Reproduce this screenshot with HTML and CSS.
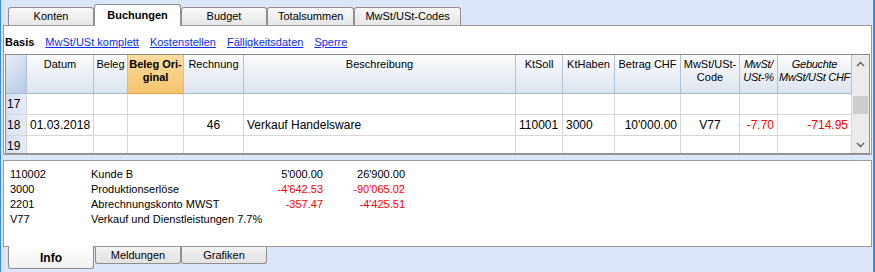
FILE: index.html
```html
<!DOCTYPE html>
<html lang="de">
  <head>
    <meta charset="UTF-8" />
    <title>Buchungen</title>
    <link rel="stylesheet" href="styles.css">
  </head>
  <body>
    <div class="window">
      <div class="tabs top-tabs">
        <div class="tab">Konten</div>
        <div class="tab active">Buchungen</div>
        <div class="tab">Budget</div>
        <div class="tab">Totalsummen</div>
        <div class="tab">MwSt/USt-Codes</div>
      </div>

      <div class="panel main">
        <div class="subbar">
          <b>Basis</b>
          <a href="#">MwSt/USt komplett</a>
          <a href="#">Kostenstellen</a>
          <a href="#">Fälligkeitsdaten</a>
          <a href="#">Sperre</a>
        </div>

        <div class="grid">
          <div class="sheet">
            <div class="row head">
              <div class="cell rn"></div>
              <div class="cell">Datum</div>
              <div class="cell">Beleg</div>
              <div class="cell orange">Beleg Ori-<br>ginal</div>
              <div class="cell">Rechnung</div>
              <div class="cell">Beschreibung</div>
              <div class="cell">KtSoll</div>
              <div class="cell">KtHaben</div>
              <div class="cell">Betrag CHF</div>
              <div class="cell">MwSt/USt-<br>Code</div>
              <div class="cell it">MwSt/<br>USt-%</div>
              <div class="cell it">Gebuchte<br>MwSt/USt CHF</div>
            </div>
            <div class="row">
              <div class="cell rn">17</div>
              <div class="cell"></div><div class="cell"></div><div class="cell"></div>
              <div class="cell"></div><div class="cell"></div><div class="cell"></div>
              <div class="cell"></div><div class="cell"></div><div class="cell"></div>
              <div class="cell"></div><div class="cell"></div>
            </div>
            <div class="row">
              <div class="cell rn">18</div>
              <div class="cell">01.03.2018</div>
              <div class="cell"></div>
              <div class="cell"></div>
              <div class="cell c">46</div>
              <div class="cell">Verkauf Handelsware</div>
              <div class="cell">110001</div>
              <div class="cell">3000</div>
              <div class="cell r">10'000.00</div>
              <div class="cell c">V77</div>
              <div class="cell r neg">-7.70</div>
              <div class="cell r neg">-714.95</div>
            </div>
            <div class="row">
              <div class="cell rn">19</div>
              <div class="cell"></div><div class="cell"></div><div class="cell"></div>
              <div class="cell"></div><div class="cell"></div><div class="cell"></div>
              <div class="cell"></div><div class="cell"></div><div class="cell"></div>
              <div class="cell"></div><div class="cell"></div>
            </div>
          </div>

          <div class="scrollbar">
            <div class="arrow">
              <svg width="9" height="6" viewBox="0 0 9 6"><polyline points="1,5 4.5,1.5 8,5" fill="none" stroke="#5f5f5f" stroke-width="1.4"/></svg>
            </div>
            <div class="thumb"></div>
            <div class="arrow down">
              <svg width="9" height="6" viewBox="0 0 9 6"><polyline points="1,1 4.5,4.5 8,1" fill="none" stroke="#5f5f5f" stroke-width="1.4"/></svg>
            </div>
          </div>
        </div>
      </div>

      <div class="panel info">
        <div class="info-row"><span>110002</span><span>Kunde B</span><span class="num">5'000.00</span><span class="num">26'900.00</span></div>
        <div class="info-row"><span>3000</span><span>Produktionserlöse</span><span class="num neg">-4'642.53</span><span class="num neg">-90'065.02</span></div>
        <div class="info-row"><span>2201</span><span>Abrechnungskonto MWST</span><span class="num neg">-357.47</span><span class="num neg">-4'425.51</span></div>
        <div class="info-row"><span>V77</span><span>Verkauf und Dienstleistungen 7.7%</span></div>
      </div>

      <div class="tabs bottom-tabs">
        <div class="tab active">Info</div>
        <div class="tab">Meldungen</div>
        <div class="tab">Grafiken</div>
      </div>
    </div>
  </body>
</html>
```

FILE: styles.css
```css
* {
  box-sizing: border-box;
}
body {
  margin: 0;
  font-family: "Liberation Sans", Arial, sans-serif;
  font-size: 11px;
  color: #000;
  background-color: #dbe6f8;
}
.window {
  width: 875px;
  height: 272px;
  border-left: 1px solid #3d8ae0;
  border-right: 2px solid #3d8ae0;
  padding: 0 1px 0 2px;
  overflow: hidden;
}

/* tabs */
.tabs {
  display: flex;
  position: relative;
  z-index: 1;
  padding-left: 5px;
}
.tab {
  min-width: 86px;
  padding: 0 10px;
  border: 1px solid #8f8f8f;
  background: linear-gradient(#f8f8f8, #e6e6e6);
  text-align: center;
}
.top-tabs {
  height: 25px;
  align-items: flex-end;
}
.top-tabs .tab {
  height: 18px;
  line-height: 16px;
  border-bottom: none;
  border-radius: 3px 3px 0 0;
}
.top-tabs .tab.active {
  min-width: 87px;
  height: 22px;
  margin-bottom: -1px;
  line-height: 20px;
  background: #fff;
  font-weight: bold;
}
.bottom-tabs {
  margin-top: -1px;
  align-items: flex-start;
}
.bottom-tabs .tab {
  height: 17px;
  margin-top: 1px;
  line-height: 16px;
  border-top: none;
  border-radius: 0 0 3px 3px;
  background: linear-gradient(#f2f2f2, #e2e2e2);
}
.bottom-tabs .tab.active {
  height: 23px;
  margin: 0 1px 0 0;
  padding-top: 2px;
  line-height: 20px;
  background: linear-gradient(#fff, #f0f0f0);
  font-weight: bold;
  font-size: 12px;
}

/* panels */
.panel {
  border: 1px solid #9b9b9b;
  background: #fff;
}
.main {
  height: 130px;
}
.subbar {
  display: flex;
  gap: 11px;
  height: 28px;
  padding: 9px 0 0 1px;
  line-height: 14px;
}
.subbar a {
  color: #0b30e6;
  text-decoration: underline;
}

/* grid */
.grid {
  display: flex;
  height: 100px;
  margin: 0 1px;
  border: 1px solid #8c8c8c;
  overflow: hidden;
}
.sheet {
  width: 846px;
  font-size: 12px;
}
.row {
  display: grid;
  grid-template-columns: 21px 67px 34px 56px 60px 272px 47px 52px 66px 59px 38px 74px;
}
.cell {
  height: 21px;
  padding: 0 3px;
  line-height: 20px;
  border-right: 1px solid #d6d6d6;
  border-bottom: 1px solid #d6d6d6;
  white-space: nowrap;
  overflow: hidden;
}
.cell.c {
  text-align: center;
}
.cell.r {
  text-align: right;
}
.cell.rn {
  padding: 0 0 0 1px;
  background: linear-gradient(90deg, #d5e1f3, #e5ecf8);
}
.head .cell {
  height: 39px;
  padding: 3px 0 0;
  font-size: 11px;
  line-height: 13px;
  text-align: center;
  background: linear-gradient(#fbfcfd, #dde4ee);
  border-right-color: #b3c1d4;
  border-bottom-color: #a9b7ca;
}
.head .cell.rn {
  background: linear-gradient(135deg, #e6edf8, #b7c9e3);
}
.head .cell.orange {
  font-weight: bold;
  background: linear-gradient(#fbdc9f, #f4c46e);
  border-bottom-color: #e4a23e;
}
.head .cell.it {
  font-style: italic;
  letter-spacing: -0.3px;
}
.neg {
  color: #f00;
}

/* scrollbar */
.scrollbar {
  display: flex;
  flex-direction: column;
  width: 17px;
  background-color: #ebebeb;
}
.arrow {
  display: flex;
  align-items: center;
  justify-content: center;
  height: 17px;
}
.arrow.down {
  margin-top: auto;
}
.thumb {
  height: 18px;
  margin: 24px 1px 0;
  background-color: #cdcdcd;
}

/* info */
.info {
  height: 87px;
  margin-top: 5px;
  padding: 6px 0 0 6px;
}
.info-row {
  display: grid;
  grid-template-columns: 81px 150px 82px 82px;
  line-height: 15px;
  white-space: nowrap;
}
.info-row .num {
  text-align: right;
}
```
